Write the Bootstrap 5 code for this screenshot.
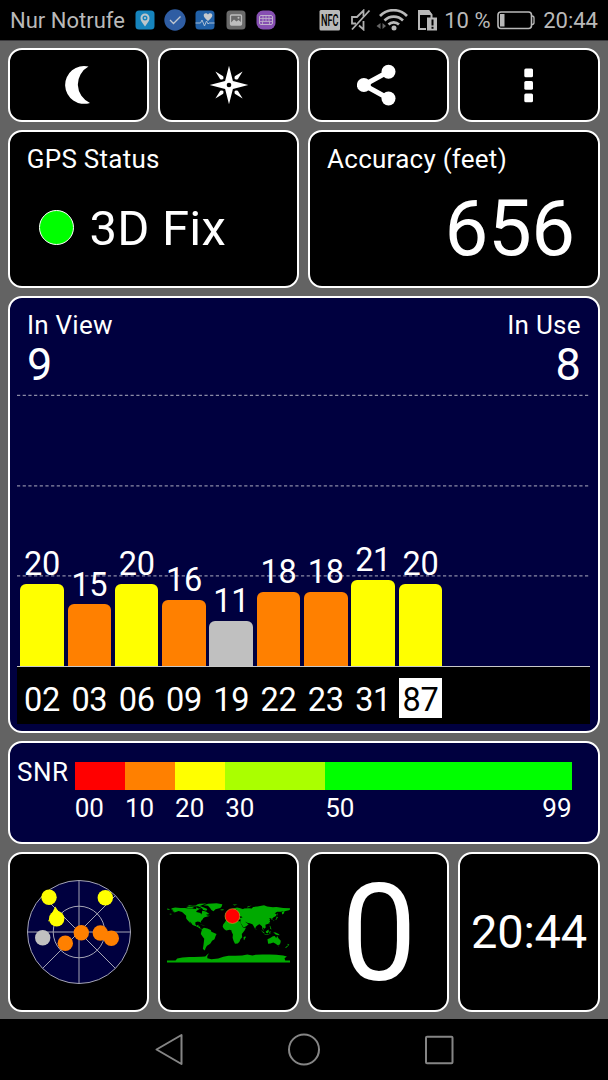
<!DOCTYPE html>
<html lang="de">
<head>
<meta charset="utf-8">
<meta name="viewport" content="width=device-width, initial-scale=1">
<title>GPS Status</title>
<link href="https://cdn.jsdelivr.net/npm/bootstrap@5.3.0/dist/css/bootstrap.min.css" rel="stylesheet">
<style>
  body { width: 608px; height: 1080px; overflow: hidden; background: #000; color: #fff; font-family: Roboto, sans-serif; }
  svg { display: block; flex: none; }
  .statusbar { height: 41px; padding: 0 10px; color: #b9b9b9; font-size: 22px; line-height: 41px; border-bottom: 1px solid #3c3b3e; }
  .carrier { width: 123.7px; }
  .apps { gap: 8.4px; }
  .dash { height: 978px; background: #636363; padding: 7px 8.4px 0 8px; gap: 8px; }
  .tiles { display: grid; grid-template-columns: repeat(4, 1fr); gap: 9px; }
  .tiles.two { grid-template-columns: repeat(2, 1fr); }
  .panel { background: #000; border: 2px solid #fff; border-radius: 14px; color: #fff; padding: 0; min-width: 0; }
  .navy { background: #00003f; }
  .h-btn { height: 73.5px; }
  .h-info { height: 158.5px; padding: 12.3px 16.8px 0; }
  .h-chart { height: 437px; padding: 12px 7.3px 0; }
  .h-snr { height: 103px; padding: 19px 26.1px 0 7px; }
  .h-mini { height: 159.5px; }
  .label { font-size: 26px; line-height: 30px; white-space: nowrap; letter-spacing: .25px; }
  .value-row { height: 110px; }
  .dot { width: 35px; height: 35px; border-radius: 50%; background: #0f0; border: 1.3px solid #fff; margin: -2px 16px 0 11.8px; }
  .fix { font-size: 49px; line-height: 60px; letter-spacing: .2px; }
  .acc { font-size: 78px; line-height: 90px; padding-right: 6px; letter-spacing: -.4px; }
  .count { font-size: 45px; line-height: 46px; margin-top: 1.500px; }
  .counts { height: 77px; padding: 0 9.6px; }
  .plot { height: 280px; border-bottom: 1px solid #c8c8c8; padding: 0 3px; gap: 3.8px; position: relative; }
  .grid-lines { position: absolute; left: 0; top: 0; }
  .sat { width: 43.5px; text-align: center; font-size: 32.5px; letter-spacing: -.3px; line-height: 36px; position: relative; }
  .sat-bar { border-radius: 6px 6px 0 0; margin-top: 1.700px; }
  .ids { height: 56.5px; background: #000; padding: 11px 3px 0; gap: 3.8px; }
  .sat-id { width: 43.5px; height: 40px; text-align: center; font-size: 32.5px; letter-spacing: -.3px; line-height: 40px; padding-top: 1.500px; }
  .sat-id.active-sat { background: #fff; color: #000; }
  .y { background: #ff0; } .o { background: #ff8000; } .g { background: #c0c0c0; }
  .scale { display: grid; grid-template-columns: 50.2px 50.2px 50.2px 100px 1fr; flex: 1; }
  .seg { height: 28px; }
  .scale .label { margin-top: 2.6px; letter-spacing: 0; }
  .snr-name { width: 57.7px; margin-top: -4.600px; letter-spacing: .5px; }
  .zero { font-size: 135px; line-height: 150px; padding-top: 5px; }
  .clock { font-size: 47px; line-height: 60px; letter-spacing: -.2px; padding-top: 1px; }
  .navbar3 { height: 61px; }
</style>
</head>
<body>
<header class="statusbar d-flex align-items-center">
  <span class="carrier text-nowrap">Nur Notrufe</span>
  <div class="apps d-flex align-items-center">
    <svg width="22" height="22" viewBox="0 0 22 22"><rect x="1.5" y="1.5" width="19" height="19" rx="3.5" fill="#1684bd"/><path d="M11 17.5C8 13.5 6.5 11.7 6.5 9a4.5 4.5 0 0 1 9 0C15.500 11.7 14 13.500 11 17.500Z" fill="#bcc6cb"/><circle cx="11" cy="9" r="1.8" fill="none" stroke="#1684bd" stroke-width="1.4"/></svg>
    <svg width="22" height="22" viewBox="0 0 22 22"><circle cx="11" cy="11" r="10.700" fill="#2f5da3"/><path d="M6 11l3.500 3.500L16.500 7.500" fill="none" stroke="#c3c8d0" stroke-width="1.300"/></svg>
    <svg width="22" height="22" viewBox="0 0 22 22"><rect x="1.500" y="1.500" width="19" height="19" rx="3.500" fill="#2161a8"/><path d="M14 12C11 9.500 9.700 8 9.700 6.300 9.700 4 12.700 3.500 14 5.500c1.300-2 4.300-1.500 4.300.8C18.300 8 17 9.500 14 12Z" fill="#c4c9ce"/><path d="M1.500 14h5l1.500-3 2.500 6 2-5 1.500 3 1-1h5.500" fill="none" stroke="#a9bdd4" stroke-width="1"/></svg>
    <svg width="22" height="22" viewBox="0 0 22 22"><rect x="1.500" y="1.500" width="19" height="19" rx="3.500" fill="#6a6a6a"/><rect x="5.500" y="6" width="11" height="10" rx="1" fill="#696969" stroke="#bdbdbd" stroke-width="1.300"/><path d="M6 13.500l3-3 2.500 2 2-1.500 3 2.500V16H6Z" fill="#bdbdbd"/><circle cx="13.500" cy="8.700" r="1" fill="#bdbdbd"/></svg>
    <svg width="22" height="22" viewBox="0 0 22 22"><rect x="1.500" y="1.500" width="19" height="19" rx="6.500" fill="#864fb2"/><rect x="4.500" y="6.500" width="13" height="9" rx="1.500" fill="none" stroke="#c0b2cc" stroke-width="1"/><path d="M5 9.500h12M5 12.500h12M8 6.500v6M11 6.500v6M14 6.500v6M7.500 12.500v3M14.500 12.500v3" stroke="#c0b2cc" stroke-width=".8"/></svg>
  </div>
  <div class="d-flex align-items-center ms-auto">
    <svg width="21" height="21" viewBox="0 0 21 21" overflow="visible" style="margin-right:10px"><rect x="-.5" width="20.500" height="20.500" rx="1.500" fill="#b9b9b9"/><text x="1" y="16" font-family="Roboto, sans-serif" font-size="16" font-weight="500" textLength="17.500" lengthAdjust="spacingAndGlyphs" fill="#000">NFC</text></svg>
    <svg width="21" height="22" viewBox="0 0 21 22" style="margin-right:4px" fill="none" stroke="#b0b0b0" stroke-width="1.800"><path d="M5 14.500H1V8H6L12.500 1.500v6M12.500 12v8.500L8 16.500"/><path d="M18.500 1.500L1 20.500"/></svg>
    <svg width="33" height="22" viewBox="0 0 33 22" style="margin-right:8px" fill="none" stroke="#b9b9b9"><g stroke-width="2.600"><path d="M4 7A18.500 18.500 0 0 1 31 7M8.500 11.500a13 13 0 0 1 18.500 0M12.500 15.500a7.500 7.500 0 0 1 10.500 0"/></g><circle cx="18" cy="19" r="2.500" fill="#b9b9b9" stroke="none"/><path d="M4.500 14v6L.5 17ZM6.500 14v6L10 17Z" fill="#666" stroke="none"/></svg>
    <svg width="21" height="22" viewBox="0 0 21 22" style="margin-right:6px"><path d="M2 6.500V20h7M2 8V2h9.500l3 4v3" fill="none" stroke="#b9b9b9" stroke-width="2"/><path d="M1 1h11l3.500 5H1Z" fill="#b9b9b9"/><path d="M10 8.500h10V21.500H10Z" fill="#b9b9b9"/><path d="M15.500 10.500v6M15.500 17.700v2" stroke="#000" stroke-width="2"/></svg>
    <span class="text-nowrap" style="width:53px">10 %</span>
    <svg width="38" height="20" viewBox="0 0 38 20" style="margin-right:8px"><rect x="1" y="2" width="33.500" height="16.500" rx="3" fill="none" stroke="#b9b9b9" stroke-width="1.600"/><rect x="3" y="4" width="4.500" height="12.500" fill="#b9b9b9"/><path d="M35 6q2 0 2 2v4.500q0 2-2 2" fill="none" stroke="#b9b9b9" stroke-width="1.300"/></svg>
    <span class="text-nowrap">20:44</span>
  </div>
</header>

<main class="dash d-flex flex-column">
  <div class="tiles">
    <button class="btn panel h-btn d-flex align-items-center justify-content-center" aria-label="Night"><svg width="40" height="40" viewBox="-20 -20 40 40"><path d="M9.500-18.400A18.900 18.900 0 1 0 11 17.900A20.200 20.200 0 0 1 9.500-18.400Z" fill="#fff"/></svg></button>
    <button class="btn panel h-btn d-flex align-items-center justify-content-center" aria-label="Compass"><svg width="40" height="40" viewBox="-20 -20 40 40" fill="#fff"><path d="M0-19.300L3.900-3.900 19.300 0 3.900 3.900 0 19.300-3.900 3.900-19.300 0-3.900-3.900Z"/><path d="M-13.600-13.600L-5.800-8.800Q-4.500-4.500-8.800-5.800Z"/><path d="M13.600-13.600L5.800-8.800Q4.500-4.500 8.800-5.800Z"/><path d="M-13.600 13.600L-5.800 8.800Q-4.500 4.500-8.800 5.800Z"/><path d="M13.600 13.600L5.800 8.800Q4.500 4.500 8.800 5.800Z"/><circle r="2.300" fill="#000"/></svg></button>
    <button class="btn panel h-btn d-flex align-items-center justify-content-center" aria-label="Share"><svg width="44" height="42" viewBox="-22 -21 44 42" fill="#fff"><path d="M9.500-13.400L-15.100 0 9.500 13.500" fill="none" stroke="#fff" stroke-width="5"/><circle cx="-15.100" r="7"/><circle cx="9.500" cy="-13.300" r="7"/><circle cx="9.500" cy="13.500" r="7"/></svg></button>
    <button class="btn panel h-btn d-flex align-items-center justify-content-center" aria-label="More"><svg width="20" height="36" viewBox="-10 -18 20 36" fill="#fff"><rect x="-4.700" y="-16.500" width="8.700" height="8.700" rx="1.500"/><rect x="-4.700" y="-4" width="8.700" height="8.700" rx="1.500"/><rect x="-4.700" y="8.500" width="8.700" height="8.700" rx="1.500"/></svg></button>
  </div>

  <div class="tiles two">
    <section class="panel h-info">
      <div class="label">GPS Status</div>
      <div class="value-row d-flex align-items-center"><div class="dot"></div><div class="fix">3D Fix</div></div>
    </section>
    <section class="panel h-info">
      <div class="label">Accuracy (feet)</div>
      <div class="value-row d-flex align-items-center justify-content-end"><div class="acc">656</div></div>
    </section>
  </div>

  <section class="panel navy h-chart">
    <div class="counts d-flex justify-content-between">
      <div><div class="label">In View</div><div class="count">9</div></div>
      <div class="text-end"><div class="label">In Use</div><div class="count">8</div></div>
    </div>
    <div class="plot d-flex align-items-end" id="plot">
      <svg class="grid-lines" width="574" height="280" viewBox="0 0 574 280"><path d="M0 8.300H572M0 98.800H572M0 188.800H572" stroke="#8b8ba6" stroke-width="1.200" stroke-dasharray="3.200 2.480"/></svg>
    </div>
    <div class="ids d-flex" id="ids"></div>
  </section>

  <section class="panel navy h-snr d-flex">
    <div class="label snr-name">SNR</div>
    <div class="scale">
      <div><div class="seg" style="background:#f00"></div><div class="label">00</div></div>
      <div><div class="seg o"></div><div class="label">10</div></div>
      <div><div class="seg y"></div><div class="label">20</div></div>
      <div><div class="seg" style="background:#af0"></div><div class="label">30</div></div>
      <div><div class="seg" style="background:#0f0"></div><div class="label d-flex justify-content-between"><span>50</span><span>99</span></div></div>
    </div>
  </section>

  <div class="tiles">
    <section class="panel h-mini d-flex align-items-center justify-content-center">
      <svg width="108" height="108" viewBox="-54 -54 108 108">
        <g fill="#00003f" stroke="#a5a5b5" stroke-width="1"><circle r="51.500"/><circle r="25.800"/><path d="M0-51.500V51.500M-51.500 0H51.500M-36.400-36.400L36.400 36.400M36.400-36.400L-36.400 36.400"/></g>
        <g fill="#ff0"><circle cx="-30" cy="-34.700" r="7.700"/><circle cx="26.300" cy="-34.300" r="7.700"/><circle cx="-22.300" cy="-13.300" r="7.700"/><path d="M-23.800-25.500L-18-17-31-10.500Z"/></g>
        <circle cx="-36.300" cy="5.700" r="7.700" fill="#c0c0c0"/>
        <g fill="#ff8000"><circle cx="-13.700" cy="11.300" r="7.700"/><circle cx="2.300" cy=".7" r="7.700"/><circle cx="21.300" cy="1" r="7.700"/><circle cx="32.300" cy="6.300" r="7.700"/></g>
      </svg>
    </section>
    <section class="panel h-mini d-flex align-items-center justify-content-center">
      <svg width="123" height="62" viewBox="-180 -90 360 181" overflow="visible">
        <g fill="#00aa00">
          <path d="M-168-66L-166-69-156-71-141-70-128-70-115-68-108-68-95-67-94-72-88-68-82-68-81-73-86-73-90-76-80-74-72-71-62-67-65-62-74-64-78-70-86-66-94-61-94-58-82-55-80-51-78-55-77-62-69-60-65-59-60-55-56-52-66-50-60-47-54-47-64-44-70-43-74-40-76-36-81-31-80-26-83-29-90-30-97-28-97-22-94-18-91-19-87-21-89-16-83-15-83-10-77-8-80-7-88-13-95-16-105-20-110-27-114-31-110-24-115-29-121-35-124-40-124-47-131-54-136-58-146-61-152-59-162-55-157-58-165-61-161-64Z"/>
          <path d="M-77-8L-72-12-62-10-52-5-50 0-35 6-38 13-41 22-48 26-53 34-58 38-62 40-65 44-68 50-69 55-75 50-73 37-71 20-76 14-81 6-80 1Z"/>
          <path d="M-73-78L-60-82-35-83.500-18-81-20-74-24-70-38-66-44-60-50-64-54-70-60-76Z"/>
          <path d="M-120-76L-115-78-105-76-95-77-92-80-85-82-65-83-75-79-82-76-92-75-105-74Z"/><path d="M-124-73L-115-74-101-71-105-69-117-69Z"/>
          <path d="M-84-22L-75-20-68-18-76-19Z"/><path d="M-24-65L-14-66-15-63-22-63Z"/>
          <path d="M-17-15L-16-21-10-29-6-35 10-37 11-33 20-31 25-32 33-31 38-21 43-12 51-12 47-4 39 6 40 16 35 22 32 29 27 34 19 35 15 27 12 17 13 8 9 0 9-4 4-6-7-4-13-8Z"/>
          <path d="M49 12L50 16 46 25 44 22 45 16Z"/>
          <path d="M-9-37L-9-43-2-43-2-48 3-51 9-54 8-57 12-56 20-54 24-59 30-60 22-60 25-65 22-65 17-61 16-56 12-59 6-58 5-62 14-68 25-71 32-70 41-67 33-66 44-67 45-68 60-69 68-68 72-73 85-74 104-78 113-74 130-72 140-73 160-70 180-69 180-65 177-63 164-60 162-54 157-51 156-57 163-61 153-59 142-59 135-54 141-52 139-46 132-43 128-39 129-35 126-35 125-40 118-39 122-37 120-34 122-30 117-24 108-21 109-13 105-9 102-12 100-13 104-2 99-8 98-16 91-22 87-21 80-15 78-8 73-18 70-22 62-25 57-26 48-30 56-24 59-22 52-16 44-13 39-21 34-28 36-36 27-37 27-41 36-41 41-42 38-45 31-46 28-41 23-40 23-37 19-41 13-45 18-40 16-38 10-44 3-43-1-38Z"/>
          <path d="M-6-50L1-51 0-54-3-58-5-58-3-54Z"/><path d="M-10-52L-6-52-6-55-9-54Z"/><path d="M54-71L56-74 68-77 58-72Z"/><path d="M12-80L26-80 18-77Z"/>
          <path d="M130-31L132-34 140-35 142-39 145-43 141-45 139-37Z"/><path d="M142-46L144-54 142-54Z"/><path d="M80-9L82-7 80-6Z"/><path d="M120-25L122-24 120-22Z"/><path d="M120-18L122-18 126-7 122-9 122-13Z"/>
          <path d="M95-5L104 2 106 6 100 1Z"/><path d="M105 6L115 7 121 9 106 8Z"/><path d="M109-1L117-7 118-1 115 4 110 3Z"/><path d="M119 5L120-1 125-1 122 1 123 5Z"/><path d="M131 1L138 2 147 6 150 10 143 9 138 8Z"/>
          <path d="M114 22L122 18 130 13 137 12 136 15 141 17 142 11 146 19 153 26 152 33 150 37 144 39 138 35 131 31 123 34 116 35Z"/><path d="M145 41L148 41 147 43Z"/>
          <path d="M173 35L178 38 175 41 173 40Z"/><path d="M172 41L174 42 168 47 166 46Z"/>
          <path d="M-180 90V84H-155L-150 78-135 75-115 74-100 74-80 73-68 72-62 66-57 63-62 71-62 77-50 80-30 78-15 73 0 70 20 70 40 69 55 66 70 69 80 67 100 66 120 66 140 67 160 69 171 72 164 77 166 84H180V90Z"/>
          <path d="M-172-53h5v2h-5ZM-180-68L-170-66-178-64Z"/>
        </g>
        <circle cx="11.500" cy="-46" r="21.500" fill="#f00" stroke="#c9a024" stroke-width="2"/>
      </svg>
    </section>
    <section class="panel h-mini d-flex align-items-center justify-content-center"><div class="zero">0</div></section>
    <section class="panel h-mini d-flex align-items-center justify-content-center"><div class="clock">20:44</div></section>
  </div>
</main>

<nav class="navbar3">
  <svg width="608" height="61" viewBox="0 0 608 61" fill="none" stroke="#858585" stroke-width="2" stroke-linejoin="round"><path d="M181.500 16V45L156.500 30.500Z"/><circle cx="304" cy="30.500" r="15"/><rect x="426" y="17.700" width="26.500" height="26.500" rx="1"/></svg>
</nav>

<script src="https://cdn.jsdelivr.net/npm/bootstrap@5.3.0/dist/js/bootstrap.bundle.min.js"></script>
<script>
  const satellites = [['02',20,'y'],['03',15,'o'],['06',20,'y'],['09',16,'o'],['19',11,'g'],['22',18,'o'],['23',18,'o'],['31',21,'y'],['87',20,'y']];
  const plot = document.getElementById('plot'), ids = document.getElementById('ids');
  for (const [id, snr, tone] of satellites) {
    plot.insertAdjacentHTML('beforeend', `<div class="sat">${snr}<div class="sat-bar ${tone}" style="height:${(snr * 4.12).toFixed(1)}px"></div></div>`);
    ids.insertAdjacentHTML('beforeend', `<div class="sat-id${id === '87' ? ' active-sat' : ''}">${id}</div>`);
  }
</script>
</body>
</html>
